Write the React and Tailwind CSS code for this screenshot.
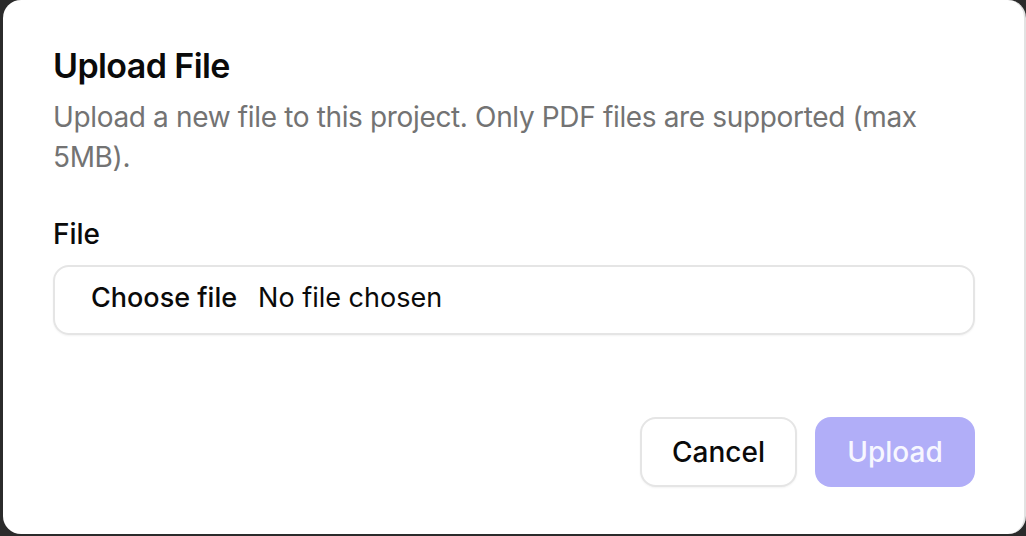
export default function App() {
  return (
    <div className="w-[1026px] h-[536px] bg-[#2b2b2b] pl-[3px] flex overflow-hidden" style={{ fontFamily: "Inter, 'Noto Sans', sans-serif" }}>
      <div className="w-[1023px] h-[534px] rounded-[18px] bg-white border-r-2 border-[#e2e2e2] pl-[50px] pr-[49px] pt-[42px] flex flex-col">
        {/* Header */}
        <h2 className="text-[34px] leading-[48px] font-semibold text-[#0a0a0a] tracking-[-0.6px]">Upload File</h2>
        <p className="mt-[7px] text-[28px] leading-[40px] text-[#737373] tracking-[-0.35px]">
          Upload a new file to this project. Only PDF files are supported (max 5MB).
        </p>

        {/* Field */}
        <label className="mt-[37px] text-[28px] leading-[40px] font-medium text-[#0a0a0a]">File</label>
        <div className="mt-[11px] h-[70px] rounded-[16px] border-2 border-[#e5e5e5] shadow-[0_1px_2px_rgba(0,0,0,0.05)] flex items-center pl-[36px] pb-[4px] text-[27px] text-[#0a0a0a]">
          <span className="font-medium">Choose file</span>
          <span className="ml-[21px]">No file chosen</span>
        </div>

        {/* Footer */}
        <div className="mt-[82px] flex justify-end gap-[18px]">
          <button className="w-[157px] h-[70px] rounded-[16px] border-2 border-[#e5e5e5] bg-white shadow-[0_1px_2px_rgba(0,0,0,0.05)] text-[28px] font-medium text-[#0a0a0a]">
            Cancel
          </button>
          <button className="w-[160px] h-[70px] rounded-[16px] bg-[#b1aef8] text-[28px] font-medium text-[#f7f7ff]">
            Upload
          </button>
        </div>
      </div>
    </div>
  );
}
